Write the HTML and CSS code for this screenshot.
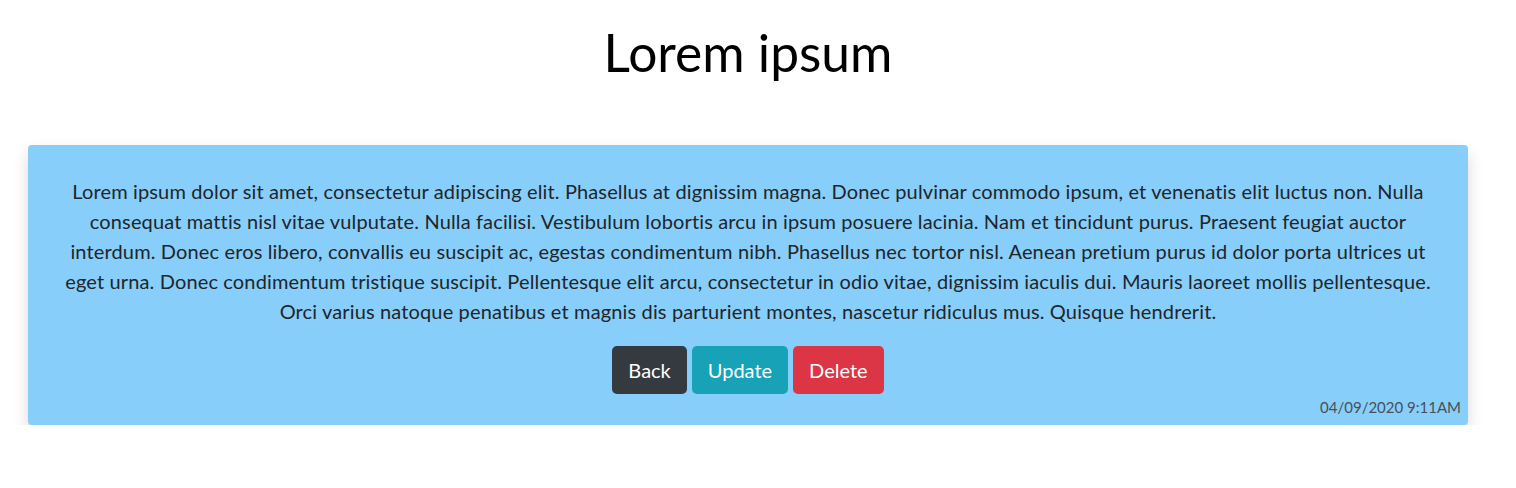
FILE: index.html
```html
<!DOCTYPE html>
<html lang="en">
<head>
<meta charset="utf-8">
<title>Lorem ipsum</title>
<link rel="stylesheet" href="styles.css">
</head>
<body>
<main class="page">
  <h1 class="title">Lorem ipsum</h1>
  <section class="card">
    <p class="card-text">Lorem ipsum dolor sit amet, consectetur adipiscing elit. Phasellus at dignissim magna. Donec pulvinar commodo ipsum, et venenatis elit luctus non. Nulla consequat mattis nisl vitae vulputate. Nulla facilisi. Vestibulum lobortis arcu in ipsum posuere lacinia. Nam et tincidunt purus. Praesent feugiat auctor interdum. Donec eros libero, convallis eu suscipit ac, egestas condimentum nibh. Phasellus nec tortor nisl. Aenean pretium purus id dolor porta ultrices ut eget urna. Donec condimentum tristique suscipit. Pellentesque elit arcu, consectetur in odio vitae, dignissim iaculis dui. Mauris laoreet mollis pellentesque. Orci varius natoque penatibus et magnis dis parturient montes, nascetur ridiculus mus. Quisque hendrerit.</p>
    <div class="actions">
      <button class="btn btn-dark">Back</button>
      <button class="btn btn-info">Update</button>
      <button class="btn btn-danger">Delete</button>
    </div>
    <div class="date">04/09/2020 9:11AM</div>
  </section>
</main>
</body>
</html>
```
FILE: styles.css
```css
* { box-sizing: border-box; }
html, body { margin: 0; padding: 0; background: #fff; }
body {
  font-family: "Lato", "Open Sans", sans-serif;
  font-variant-ligatures: none;
  color: #212529;
}
.page {
  width: 1440px;
  margin-left: 28px;
  display: flex;
  flex-direction: column;
}
.title {
  margin: 21px 0 0;
  font-size: 51.5px;
  font-weight: 400;
  line-height: 62px;
  text-align: center;
  color: #000;
}
.card {
  margin-top: 62px;
  height: 280px;
  background: #87cefa;
  border-radius: 4px;
  box-shadow: 0 8px 16px rgba(0, 0, 0, 0.15);
  padding: 31px 7px 0 30px;
  display: flex;
  flex-direction: column;
}
.card-text {
  margin: 0 23px 20px 0;
  font-size: 20px;
  line-height: 30px;
  letter-spacing: 0.14px;
  text-align: center;
}
.actions {
  display: flex;
  justify-content: center;
  gap: 5px;
  margin-right: 23px;
}
.btn {
  font-family: inherit;
  font-size: 20px;
  line-height: 30px;
  padding: 9px 16px;
  border: 0;
  border-radius: 5px;
  color: #fff;
}
.btn-dark { background: #343a40; }
.btn-info { background: #17a2b8; }
.btn-danger { background: #dc3545; }
.date {
  margin-top: 1px;
  text-align: right;
  font-size: 15px;
  line-height: 24px;
  color: #495057;
}
```
